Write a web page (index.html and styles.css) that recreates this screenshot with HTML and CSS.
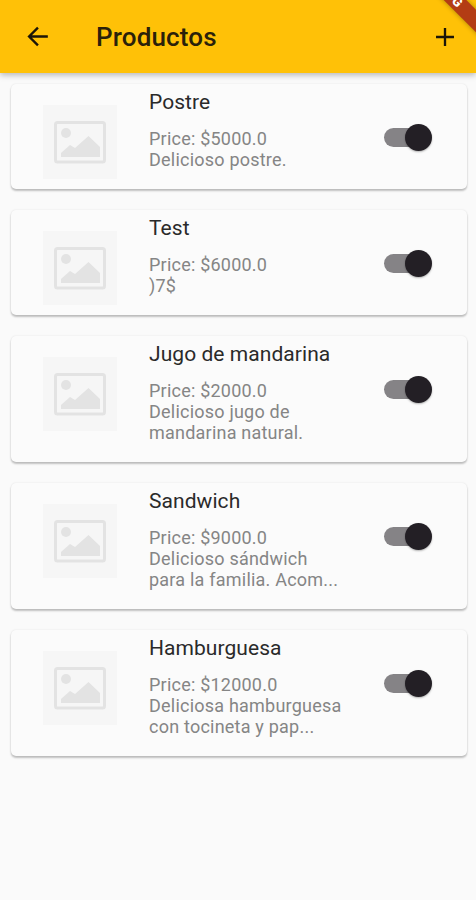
FILE: index.html
```html
<!DOCTYPE html>
<html lang="es"><head><meta charset="utf-8"><title>Productos</title><link rel="stylesheet" href="styles.css"></head>
<body>
<svg class="defs" aria-hidden="true"><symbol id="photo" viewBox="0 0 74 74"><rect x="12.500" y="17.500" width="49" height="39.500" rx="2" fill="none" stroke="#e3e3e3" stroke-width="3"/><circle cx="23" cy="28" r="5" fill="#e3e3e3"/><path d="M18 52v-4l9-8 5 3 13.500-12L57 42v10z" fill="#e3e3e3"/></symbol></svg>
<header class="bar">
<svg class="back" viewBox="0 0 24 24"><path d="M20 11.100H7.700l5.300-5.300L11.700 4.500 4.200 12l7.500 7.500L13 18.200l-5.300-5.300H20z"/></svg>
<h1>Productos</h1>
<svg class="add" viewBox="0 0 24 24"><path d="M19.700 13H13v6.700h-2V13H4.300v-2H11V4.300h2V11h6.700z"/></svg>
<div class="ribbon">G</div>
</header>
<main>
<article class="card short"><svg class="photo"><use href="#photo"/></svg><div class="info"><h2>Postre</h2><p>Price: $5000.0<br>Delicioso postre.</p></div><div class="switch"></div></article>
<article class="card short"><svg class="photo"><use href="#photo"/></svg><div class="info"><h2>Test</h2><p>Price: $6000.0<br>)7$</p></div><div class="switch"></div></article>
<article class="card"><svg class="photo"><use href="#photo"/></svg><div class="info"><h2>Jugo de mandarina</h2><p>Price: $2000.0<br>Delicioso jugo de<br>mandarina natural.</p></div><div class="switch"></div></article>
<article class="card"><svg class="photo"><use href="#photo"/></svg><div class="info"><h2>Sandwich</h2><p>Price: $9000.0<br>Delicioso sándwich<br>para la familia. Acom...</p></div><div class="switch"></div></article>
<article class="card"><svg class="photo"><use href="#photo"/></svg><div class="info"><h2>Hamburguesa</h2><p>Price: $12000.0<br>Deliciosa hamburguesa<br>con tocineta y pap...</p></div><div class="switch"></div></article>
</main>
</body></html>
```
FILE: styles.css
```css
*{box-sizing:border-box}
body{margin:0;height:900px;background:#fafafa;font-family:Roboto,sans-serif;overflow:hidden}
.defs{position:absolute;width:0;height:0}
.bar{position:relative;height:73px;background:#ffc107;display:flex;align-items:center;padding:0 17px 0 22px;box-shadow:0 2px 6px rgba(0,0,0,.28)}
.bar svg{fill:#1c1508}
.bar .back{width:31px;height:31px}
.bar .add{width:28px;height:28px}
h1{margin:0 auto 0 43px;font-size:26px;font-weight:500;line-height:32px;letter-spacing:.15px;color:#2b210a}
.ribbon{position:absolute;left:417px;top:-6px;width:80px;height:16px;background:#b33c14;color:#fff;font-size:13px;font-weight:900;line-height:16px;text-align:center;transform:rotate(45deg);box-shadow:0 0 5px rgba(0,0,0,.35)}
main{padding:11px 9px 0 11px;display:flex;flex-direction:column;gap:21px}
.card{display:flex;align-items:flex-start;height:126px;padding:0 35px 0 32px;background:#fbfbfb;border-radius:5px;box-shadow:0 2px 2px rgba(0,0,0,.23),0 0 2px rgba(0,0,0,.1)}
.short{height:105px}
.photo{width:74px;height:74px;margin-top:21px;background:#f6f6f6;flex:none}
.info{margin-left:32px;flex:1;white-space:nowrap}
h2{margin:6px 0 13px;font-size:21px;font-weight:400;line-height:25px;letter-spacing:.06px;color:#2a2a2a}
p{margin:0;font-size:18px;line-height:21px;letter-spacing:.22px;color:#858585}
.switch{display:flex;align-items:center;width:48px;height:27px;margin-top:40px}
.switch::before{content:"";width:40px;height:19px;background:#858386;border-radius:10px}
.switch::after{content:"";width:27px;height:27px;margin-left:-19px;flex:none;background:#231f25;border-radius:50%;box-shadow:0 1px 2px rgba(0,0,0,.3)}
```
